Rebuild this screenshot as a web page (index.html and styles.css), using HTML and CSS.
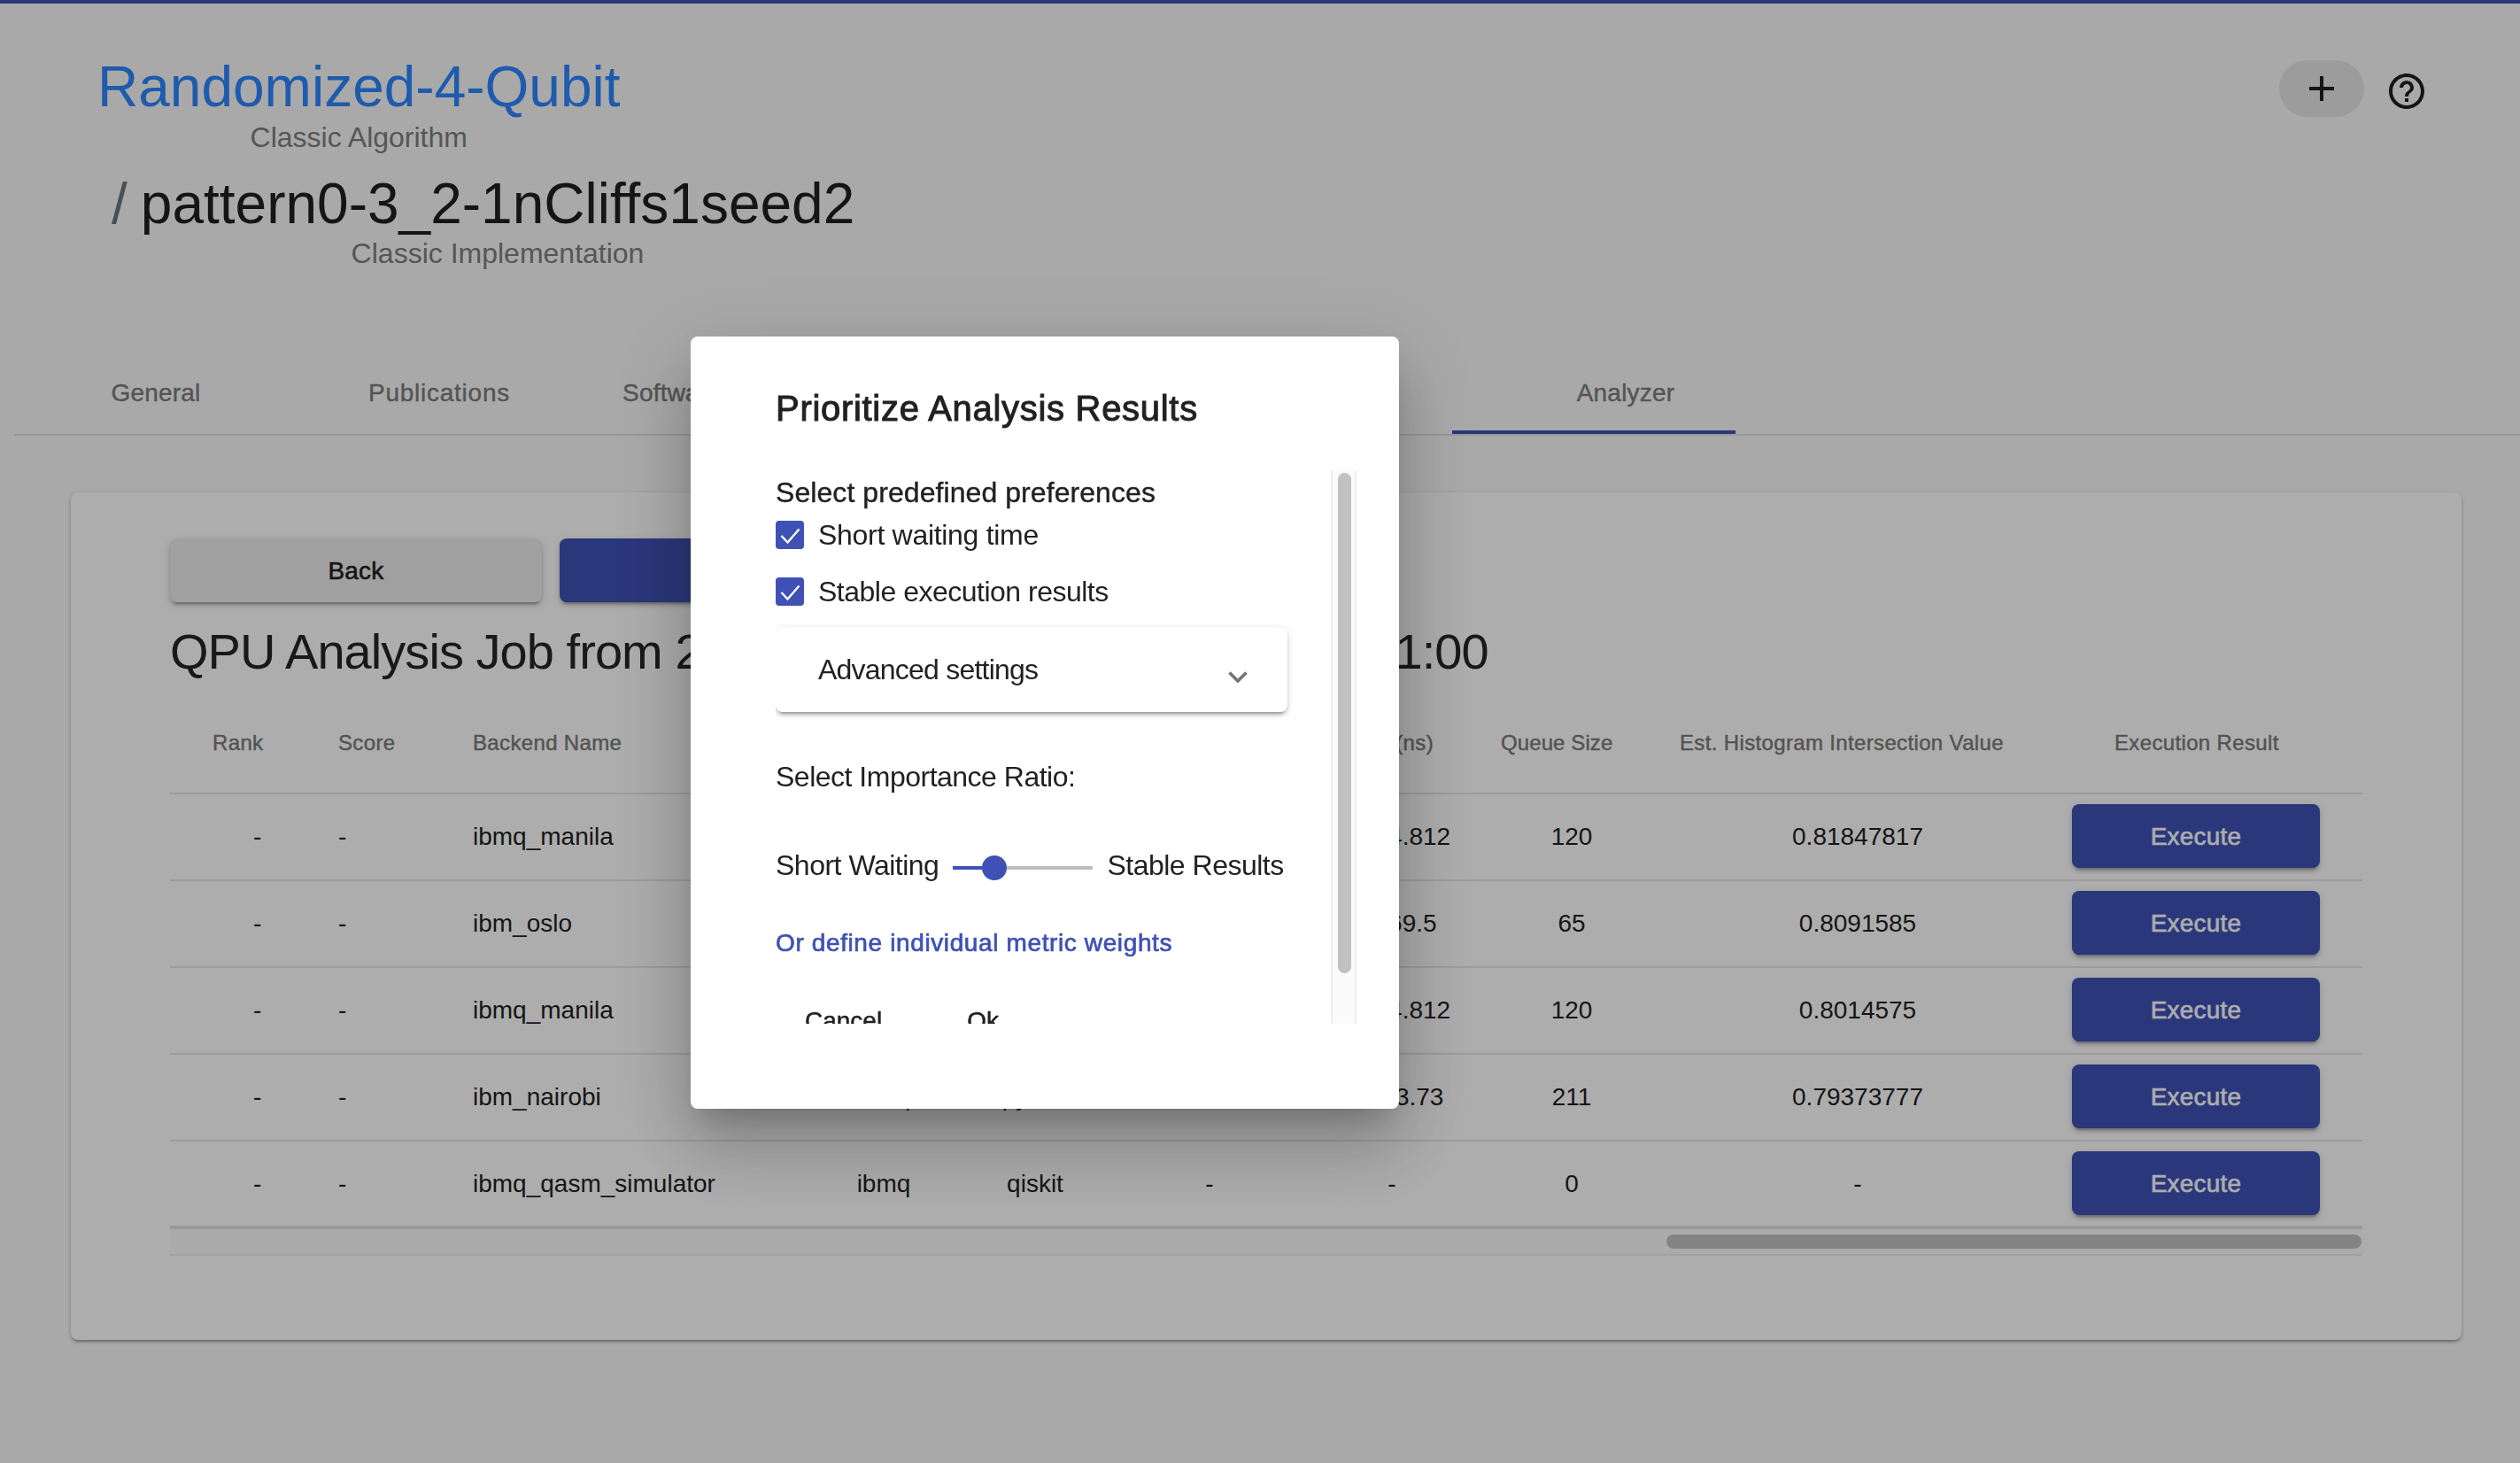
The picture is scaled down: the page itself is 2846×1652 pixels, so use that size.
FILE: index.html
```html
<!DOCTYPE html>
<html lang="en">
<head>
<meta charset="utf-8">
<title>Randomized-4-Qubit</title>
<link rel="stylesheet" href="styles.css">
</head>
<body>
<div class="topbar"></div>
<header class="header">
  <div class="titles">
    <div class="title-block">
      <h1 class="algo">Randomized-4-Qubit</h1>
      <p class="sub">Classic Algorithm</p>
    </div>
    <div class="impl-row">
      <span class="slash">/</span>
      <div class="title-block">
        <h1 class="impl">pattern0-3_2-1nCliffs1seed2</h1>
        <p class="sub">Classic Implementation</p>
      </div>
    </div>
  </div>
  <div class="actions">
    <button class="pill" aria-label="Add">
      <svg class="icon" viewBox="0 0 24 24"><path d="M19 13h-6v6h-2v-6H5v-2h6V5h2v6h6v2z"/></svg>
    </button>
    <svg class="icon help" viewBox="0 0 24 24"><path d="M11 18h2v-2h-2v2zm1-16C6.48 2 2 6.48 2 12s4.48 10 10 10 10-4.48 10-10S17.52 2 12 2zm0 18c-4.41 0-8-3.59-8-8s3.59-8 8-8 8 3.59 8 8-3.59 8-8 8zm0-14c-2.21 0-4 1.79-4 4h2c0-1.1.9-2 2-2s2 .9 2 2c0 2-3 1.75-3 5h2c0-2.25 3-2.5 3-5 0-2.21-1.79-4-4-4z"/></svg>
  </div>
</header>

<nav class="tabs">
  <div class="tab">General</div>
  <div class="tab tab-wide">Publications</div>
  <div class="tab">Software Platform</div>
  <div class="tab">Selection Criteria</div>
  <div class="tab">Execution</div>
  <div class="tab tab-active">Analyzer</div>
</nav>

<main class="card">
  <div class="btn-row">
    <button class="btn btn-plain">Back</button>
    <button class="btn btn-primary">Refresh</button>
  </div>
  <h2 class="job-title">QPU Analysis Job from 2022-10-20, Wednesday, am 09:21:00</h2>
  <table class="results">
    <colgroup>
      <col class="c1"><col class="c2"><col class="c3"><col class="c4"><col class="c5"><col class="c6"><col class="c7"><col class="c8"><col class="c9"><col class="c10">
    </colgroup>
    <thead>
      <tr>
        <th class="h-rank">Rank</th>
        <th class="h-score">Score</th>
        <th class="h-name">Backend Name</th>
        <th class="center">Provider</th>
        <th class="center">Compiler</th>
        <th class="center">Depth</th>
        <th class="h-time">Time (ns)</th>
        <th class="h-queue">Queue Size</th>
        <th class="h-hist">Est. Histogram Intersection Value</th>
        <th class="h-exec">Execution Result</th>
      </tr>
    </thead>
    <tbody>
      <tr>
        <td class="d-rank">-</td><td class="d-score">-</td><td class="d-name">ibmq_manila</td><td class="center">ibmq</td><td class="center">qiskit</td><td class="center">18</td><td class="center">17464.812</td><td class="d-queue">120</td><td class="center">0.81847817</td>
        <td class="d-exec"><button class="btn btn-primary btn-exec">Execute</button></td>
      </tr>
      <tr>
        <td class="d-rank">-</td><td class="d-score">-</td><td class="d-name">ibm_oslo</td><td class="center">ibmq</td><td class="center">qiskit</td><td class="center">21</td><td class="center">12369.5</td><td class="d-queue">65</td><td class="center">0.8091585</td>
        <td class="d-exec"><button class="btn btn-primary btn-exec">Execute</button></td>
      </tr>
      <tr>
        <td class="d-rank">-</td><td class="d-score">-</td><td class="d-name">ibmq_manila</td><td class="center">ibmq</td><td class="center">qiskit</td><td class="center">18</td><td class="center">17464.812</td><td class="d-queue">120</td><td class="center">0.8014575</td>
        <td class="d-exec"><button class="btn btn-primary btn-exec">Execute</button></td>
      </tr>
      <tr>
        <td class="d-rank">-</td><td class="d-score">-</td><td class="d-name">ibm_nairobi</td><td class="center">ibmq</td><td class="center">pytket</td><td class="center">23</td><td class="center">17653.73</td><td class="d-queue">211</td><td class="center">0.79373777</td>
        <td class="d-exec"><button class="btn btn-primary btn-exec">Execute</button></td>
      </tr>
      <tr class="last-row">
        <td class="d-rank">-</td><td class="d-score">-</td><td class="d-name">ibmq_qasm_simulator</td><td class="center">ibmq</td><td class="center">qiskit</td><td class="center">-</td><td class="center">-</td><td class="d-queue">0</td><td class="center">-</td>
        <td class="d-exec"><button class="btn btn-primary btn-exec">Execute</button></td>
      </tr>
    </tbody>
  </table>
  <div class="hscroll"><div class="hthumb"></div></div>
</main>

<div class="backdrop"></div>

<section class="dialog">
  <h3 class="dialog-title">Prioritize Analysis Results</h3>
  <div class="dialog-scroll">
    <div class="dialog-body">
      <p class="line section-label">Select predefined preferences</p>
      <label class="check">
        <svg class="box" viewBox="0 0 32 32"><rect width="32" height="32" rx="4"/><path d="M6.5 17 13.5 24.5 26.5 9.5"/></svg>
        <span class="line line-loose">Short waiting time</span>
      </label>
      <label class="check">
        <svg class="box" viewBox="0 0 32 32"><rect width="32" height="32" rx="4"/><path d="M6.5 17 13.5 24.5 26.5 9.5"/></svg>
        <span class="line">Stable execution results</span>
      </label>
      <div class="panel">
        <span class="line line-tight">Advanced settings</span>
        <svg class="chevron" viewBox="0 0 22 13"><path d="M1.5 1.5 11 11 20.5 1.5"/></svg>
      </div>
      <p class="line ratio-label">Select Importance Ratio:</p>
      <div class="slider-row">
        <span class="line">Short Waiting</span>
        <div class="slider"><i class="fill"></i><i class="thumb"></i><i class="rest"></i></div>
        <span class="line">Stable Results</span>
      </div>
      <a class="metric-link">Or define individual metric weights</a>
      <div class="dialog-actions">
        <button class="text-btn">Cancel</button>
        <button class="text-btn">Ok</button>
      </div>
    </div>
    <div class="vscroll"><div class="vthumb"></div></div>
  </div>
</section>
</body>
</html>
```
FILE: styles.css
```css
* { box-sizing: border-box; }
html, body { margin: 0; height: 1652px; overflow: hidden; }
body { background: #fafafa; font-family: "Liberation Sans", Arial, sans-serif; color: #1f1f1f; }
h1, h2, h3, p { margin: 0; font-weight: 400; }
button { font-family: inherit; border: 0; padding: 0; background: none; color: inherit; }

.topbar { height: 4px; background: #3f51b5; }

.header { display: flex; justify-content: space-between; align-items: flex-start; height: 388px; padding: 58px 104px 0 110px; }
.title-block { display: inline-flex; flex-direction: column; align-items: center; }
.algo, .impl { font-size: 64px; line-height: 72px; white-space: nowrap; }
.algo { color: #2d86ff; }
.impl { color: #1f1f1f; }
.sub { font-size: 32px; line-height: 40px; color: #7f7f7f; white-space: nowrap; }
.title-block > .sub { margin-top: 1px; }
.impl-row { display: flex; align-items: flex-start; margin: 19px 0 0 16px; }
.impl-row .sub { margin-top: 0; }
.slash { font-size: 64px; line-height: 72px; color: #6c757d; margin-right: 15px; }

.actions { display: flex; gap: 24px; align-items: flex-start; }
.pill { width: 96px; height: 64px; border-radius: 32px; background: #e6e6e6; display: flex; align-items: center; justify-content: center; margin-top: 6px; }
.icon { width: 48px; height: 48px; fill: #1f1f1f; display: block; }
.help { margin-top: 17px; }

.tabs { display: flex; height: 100px; margin-left: 16px; border-bottom: 2px solid #e0e0e0; }
.tab { width: 320px; height: 98px; padding-top: 5px; display: flex; align-items: center; justify-content: center; font-size: 28px; letter-spacing: .2px; color: #7c7c7c; -webkit-text-stroke: .4px #7c7c7c; white-space: nowrap; }
.tab-wide { letter-spacing: .75px; }
.tab-active { margin-left: 24px; padding-top: 9px; padding-left: 72px; border-bottom: 4px solid #3f51b5; }

.card { margin: 64px 66px 0 80px; padding: 52px 112px 95px; background: #fff; border-radius: 8px; box-shadow: 0 4px 2px -2px rgba(0,0,0,.2), 0 2px 4px 0 rgba(0,0,0,.14), 0 2px 6px 0 rgba(0,0,0,.12); }
.btn-row { display: flex; gap: 20px; }
.btn { width: 420px; height: 72px; padding-top: 2px; border-radius: 8px; font-size: 28px; letter-spacing: .2px; -webkit-text-stroke: .6px; box-shadow: 0 6px 2px -4px rgba(0,0,0,.2), 0 4px 4px 0 rgba(0,0,0,.14), 0 2px 10px 0 rgba(0,0,0,.12); }
.btn-plain { background: #ececec; color: #1f1f1f; }
.btn-primary { background: #3f51b5; color: #fff; }
.job-title { font-size: 56px; line-height: 72px; letter-spacing: -.95px; margin: 20px 0 10px; color: #262626; white-space: nowrap; }

.results { width: 2476px; table-layout: fixed; border-collapse: collapse; }
.c1 { width: 148px; } .c2 { width: 170px; } .c3 { width: 390px; } .c4 { width: 196px; } .c5 { width: 146px; }
.c6 { width: 248px; } .c7 { width: 164px; } .c8 { width: 226px; } .c9 { width: 436px; } .c10 { width: 352px; }
.results th { height: 114px; padding: 0; font-size: 24px; font-weight: 400; letter-spacing: .35px; color: #7a7a7a; -webkit-text-stroke: .4px #7a7a7a; text-align: left; white-space: nowrap; border-bottom: 2px solid #e6e6e6; }
.results td { height: 98px; padding: 0; font-size: 28px; line-height: 32px; color: #1f1f1f; border-bottom: 2px solid #e6e6e6; white-space: nowrap; }
.results .last-row td { border-bottom: 4px solid #e2e2e2; }
.results th.center, .results td.center { text-align: center; }
.results th.h-rank { padding-left: 48px; }
.results th.h-score { padding-left: 42px; }
.results th.h-name { padding-left: 24px; }
.results th.h-time { text-align: right; padding-right: 35px; }
.results th.h-queue { padding-left: 41px; letter-spacing: .1px; }
.results th.h-hist { padding-left: 17px; }
.results th.h-exec { padding-left: 72px; }
.results td.d-rank { padding-left: 94px; }
.results td.d-score { padding-left: 42px; }
.results td.d-name { padding-left: 24px; }
.results td.d-queue { padding-left: 16px; text-align: center; }
.results td.d-exec { padding: 0 0 2px 24px; }
.btn-exec { width: 280px; display: block; }

.hscroll { display: flex; justify-content: flex-end; height: 30px; padding: 6px 1px 0 0; background: #fdfdfd; border-bottom: 2px solid #eeeeee; }
.hthumb { width: 785px; height: 16px; border-radius: 8px; background: #c3c3c3; }

.backdrop { position: fixed; inset: 0; background: rgba(0,0,0,.32); }

.dialog { position: fixed; left: 780px; top: 380px; width: 800px; height: 872px; background: #fff; border-radius: 8px; padding: 57px 48px 96px 96px; box-shadow: 0 22px 30px -14px rgba(0,0,0,.2), 0 48px 76px 6px rgba(0,0,0,.14), 0 18px 92px 16px rgba(0,0,0,.12); }
.dialog-title { font-size: 40px; line-height: 48px; letter-spacing: .7px; color: #212121; -webkit-text-stroke: 1px #212121; white-space: nowrap; }
.dialog-scroll { position: relative; width: 656px; height: 624px; margin-top: 47px; overflow: hidden; }
.dialog-body { padding-top: 4px; }
.line { font-size: 32px; line-height: 40px; letter-spacing: -.5px; color: #212121; white-space: nowrap; }
.line-loose { letter-spacing: -.3px; }
.line-tight { letter-spacing: -.78px; }
.section-label { letter-spacing: .07px; -webkit-text-stroke: .4px #212121; }
.check { display: flex; align-items: center; gap: 16px; height: 40px; margin-top: 24px; }
.section-label + .check { margin-top: 8px; }
.box { width: 32px; height: 32px; flex: none; }
.box rect { fill: #3f51b5; }
.box path { fill: none; stroke: #fff; stroke-width: 2.4; }
.panel { width: 578px; height: 96px; margin-top: 20px; padding: 0 45px 0 48px; display: flex; align-items: center; justify-content: space-between; border-radius: 8px; background: #fff; box-shadow: 0 6px 2px -4px rgba(0,0,0,.2), 0 4px 4px 0 rgba(0,0,0,.14), 0 2px 10px 0 rgba(0,0,0,.12); }
.chevron { width: 22px; height: 13px; margin-top: 16px; fill: none; stroke: #757575; stroke-width: 3.6; }
.ratio-label { margin-top: 53px; }
.slider-row { display: flex; align-items: center; gap: 16px; margin-top: 60px; }
.slider { width: 158px; height: 28px; margin-top: 6px; display: flex; align-items: center; }
.fill { width: 33px; height: 4px; background: #3f51b5; }
.thumb { width: 28px; height: 28px; border-radius: 50%; background: #3f51b5; }
.rest { flex: 1; height: 4px; background: #bdbdbd; }
.metric-link { display: block; margin-top: 52px; font-size: 28px; line-height: 32px; letter-spacing: .62px; color: #3f51b5; -webkit-text-stroke: .7px #3f51b5; white-space: nowrap; }
.dialog-actions { display: flex; gap: 32px; margin-top: 56px; padding-left: 1px; }
.text-btn { padding: 0 32px; font-size: 28px; line-height: 32px; color: #212121; -webkit-text-stroke: .5px #212121; }
.vscroll { position: absolute; top: 0; left: 627px; width: 29px; height: 624px; padding: 2px 6px 0 6px; background: #fafafa; border-left: 2px solid #eeeeee; border-right: 2px solid #eeeeee; }
.vthumb { width: 15px; height: 565px; border-radius: 8px; background: #c1c1c1; }
```
